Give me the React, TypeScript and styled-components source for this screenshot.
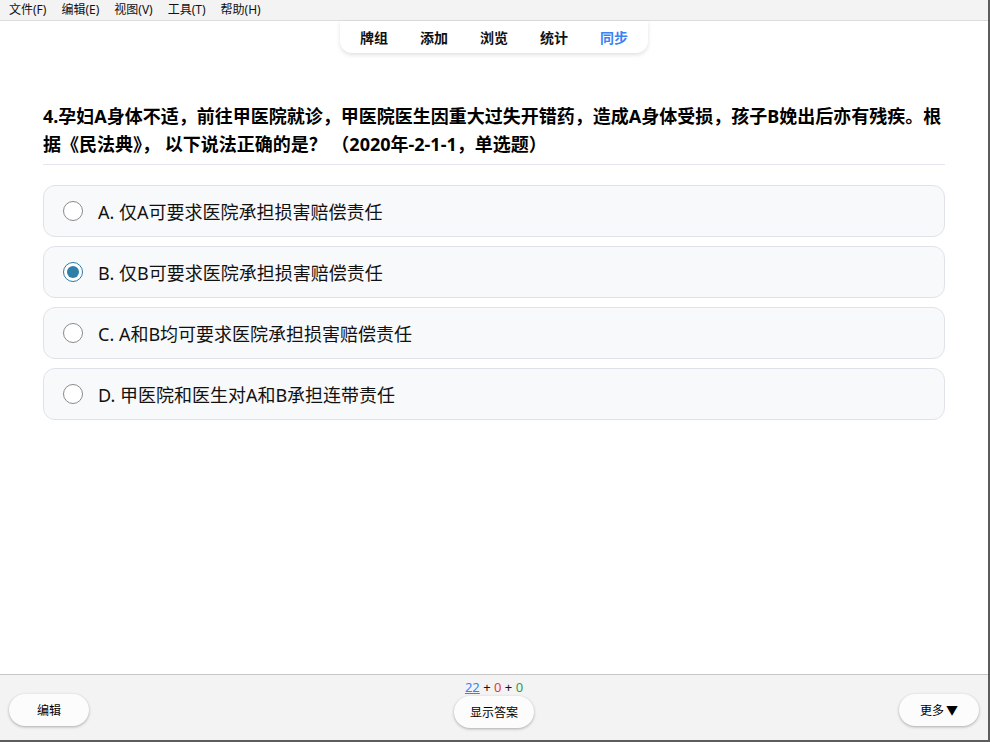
import styled, { createGlobalStyle } from 'styled-components'

const GlobalStyle = createGlobalStyle`
    html, body {
        margin: 0;
        padding: 0;
        height: 100%;
        background: #ffffff;
    }
    #root {
        height: 100%;
    }
    * {
        box-sizing: border-box;
    }
`

const menus = ['文件(F)', '编辑(E)', '视图(V)', '工具(T)', '帮助(H)']
const tabs = ['牌组', '添加', '浏览', '统计', '同步']
const options = [
    'A. 仅A可要求医院承担损害赔偿责任',
    'B. 仅B可要求医院承担损害赔偿责任',
    'C. A和B均可要求医院承担损害赔偿责任',
    'D. 甲医院和医生对A和B承担连带责任',
]

export default function App() {
    const selected = 1
    return (
        <>
            <GlobalStyle />
            <Window>
                <MenuBar>
                    {menus.map(m => <MenuItem key={m}>{m}</MenuItem>)}
                </MenuBar>
                <NavWrap>
                    <Nav>
                        {tabs.map(t => <Tab key={t} active={t === '同步'}>{t}</Tab>)}
                    </Nav>
                </NavWrap>
                <Main>
                    <Question>
                        4.孕妇A身体不适，前往甲医院就诊，甲医院医生因重大过失开错药，造成A身体受损，孩子B娩出后亦有残疾。根据《民法典》， 以下说法正确的是？ （2020年-2-1-1，单选题）
                    </Question>
                    <Divider />
                    <OptionList>
                        {options.map((o, i) => (
                            <Option key={o}>
                                <Radio checked={i === selected} />
                                <OptionText>{o}</OptionText>
                            </Option>
                        ))}
                    </OptionList>
                </Main>
                <BottomBar>
                    <Counter>
                        <Blue>22</Blue> + <Red>0</Red> + <Green>0</Green>
                    </Counter>
                    <ButtonRow>
                        <PillButton>编辑</PillButton>
                        <CenterButton>显示答案</CenterButton>
                        <PillButton>更多&#8201;▼</PillButton>
                    </ButtonRow>
                </BottomBar>
            </Window>
        </>
    )
}

const Window = styled.div`
    height: 100vh;
    display: flex;
    flex-direction: column;
    border-right: 2px solid #5c5c5c;
    border-bottom: 2px solid #5c5c5c;
    font-family: "Noto Sans", "Noto Sans CJK SC", sans-serif;
    color: #000;
`

const MenuBar = styled.div`
    height: 21px;
    display: flex;
    align-items: center;
    gap: 15px;
    padding-left: 9px;
    background: #f3f3f3;
    border-bottom: 1px solid #dcdcdc;
`

const MenuItem = styled.span`
    font-size: 12px;
    line-height: 20px;
    color: #111;
`

const NavWrap = styled.div`
    display: flex;
    justify-content: center;
`

const Nav = styled.div`
    display: flex;
    gap: 32px;
    height: 32px;
    align-items: center;
    padding: 0 20px;
    background: #fff;
    border-radius: 0 0 12px 12px;
    box-shadow: 0 2px 4px rgba(0, 0, 0, 0.12);
`

const Tab = styled.span<{ active?: boolean }>`
    font-size: 14px;
    font-weight: 700;
    color: ${p => p.active ? '#3b82f6' : '#111'};
`

const Main = styled.div`
    flex: 1;
    padding: 49px 43px 0 43px;
`

const Question = styled.div`
    font-size: 18px;
    font-weight: 700;
    line-height: 28px;
    color: #000;
`

const Divider = styled.div`
    height: 1px;
    background: #e2e7ef;
    margin-top: 6px;
`

const OptionList = styled.div`
    display: flex;
    flex-direction: column;
    gap: 9px;
    margin-top: 20px;
`

const Option = styled.div`
    height: 52px;
    display: flex;
    align-items: center;
    gap: 15px;
    padding-left: 19px;
    background: #f8f9fb;
    border: 1px solid #dfe3e9;
    border-radius: 12px;
`

const Radio = styled.span<{ checked?: boolean }>`
    width: 20px;
    height: 20px;
    border-radius: 50%;
    background: #fff;
    border: 1px solid ${p => p.checked ? '#2d7ca6' : '#8a8a8a'};
    display: flex;
    align-items: center;
    justify-content: center;
    &::after {
        content: '';
        width: 12px;
        height: 12px;
        border-radius: 50%;
        background: #2f7fa8;
        display: ${p => p.checked ? 'block' : 'none'};
    }
`

const OptionText = styled.span`
    font-size: 18px;
    color: #111;
`

const BottomBar = styled.div`
    height: 66px;
    background: #f3f3f3;
    border-top: 1px solid #c6c6c6;
    display: flex;
    flex-direction: column;
    align-items: center;
`

const Counter = styled.div`
    font-size: 13px;
    line-height: 14px;
    margin-top: 5px;
    color: #111;
`

const Blue = styled.span`
    color: #3b82f6;
    text-decoration: underline;
`

const Red = styled.span`
    color: #e53935;
`

const Green = styled.span`
    color: #2e9e44;
`

const ButtonRow = styled.div`
    width: 100%;
    display: flex;
    justify-content: space-between;
    align-items: flex-start;
    padding: 0 9px;
`

const PillButton = styled.button`
    width: 80px;
    height: 32px;
    border: none;
    border-radius: 16px;
    background: #fcfcfc;
    box-shadow: 0 1px 3px rgba(0, 0, 0, 0.3);
    font-family: "Noto Sans", "Noto Sans CJK SC", sans-serif;
    font-size: 12px;
    color: #000;
`

const CenterButton = styled(PillButton)`
    margin-top: 2px;
`
